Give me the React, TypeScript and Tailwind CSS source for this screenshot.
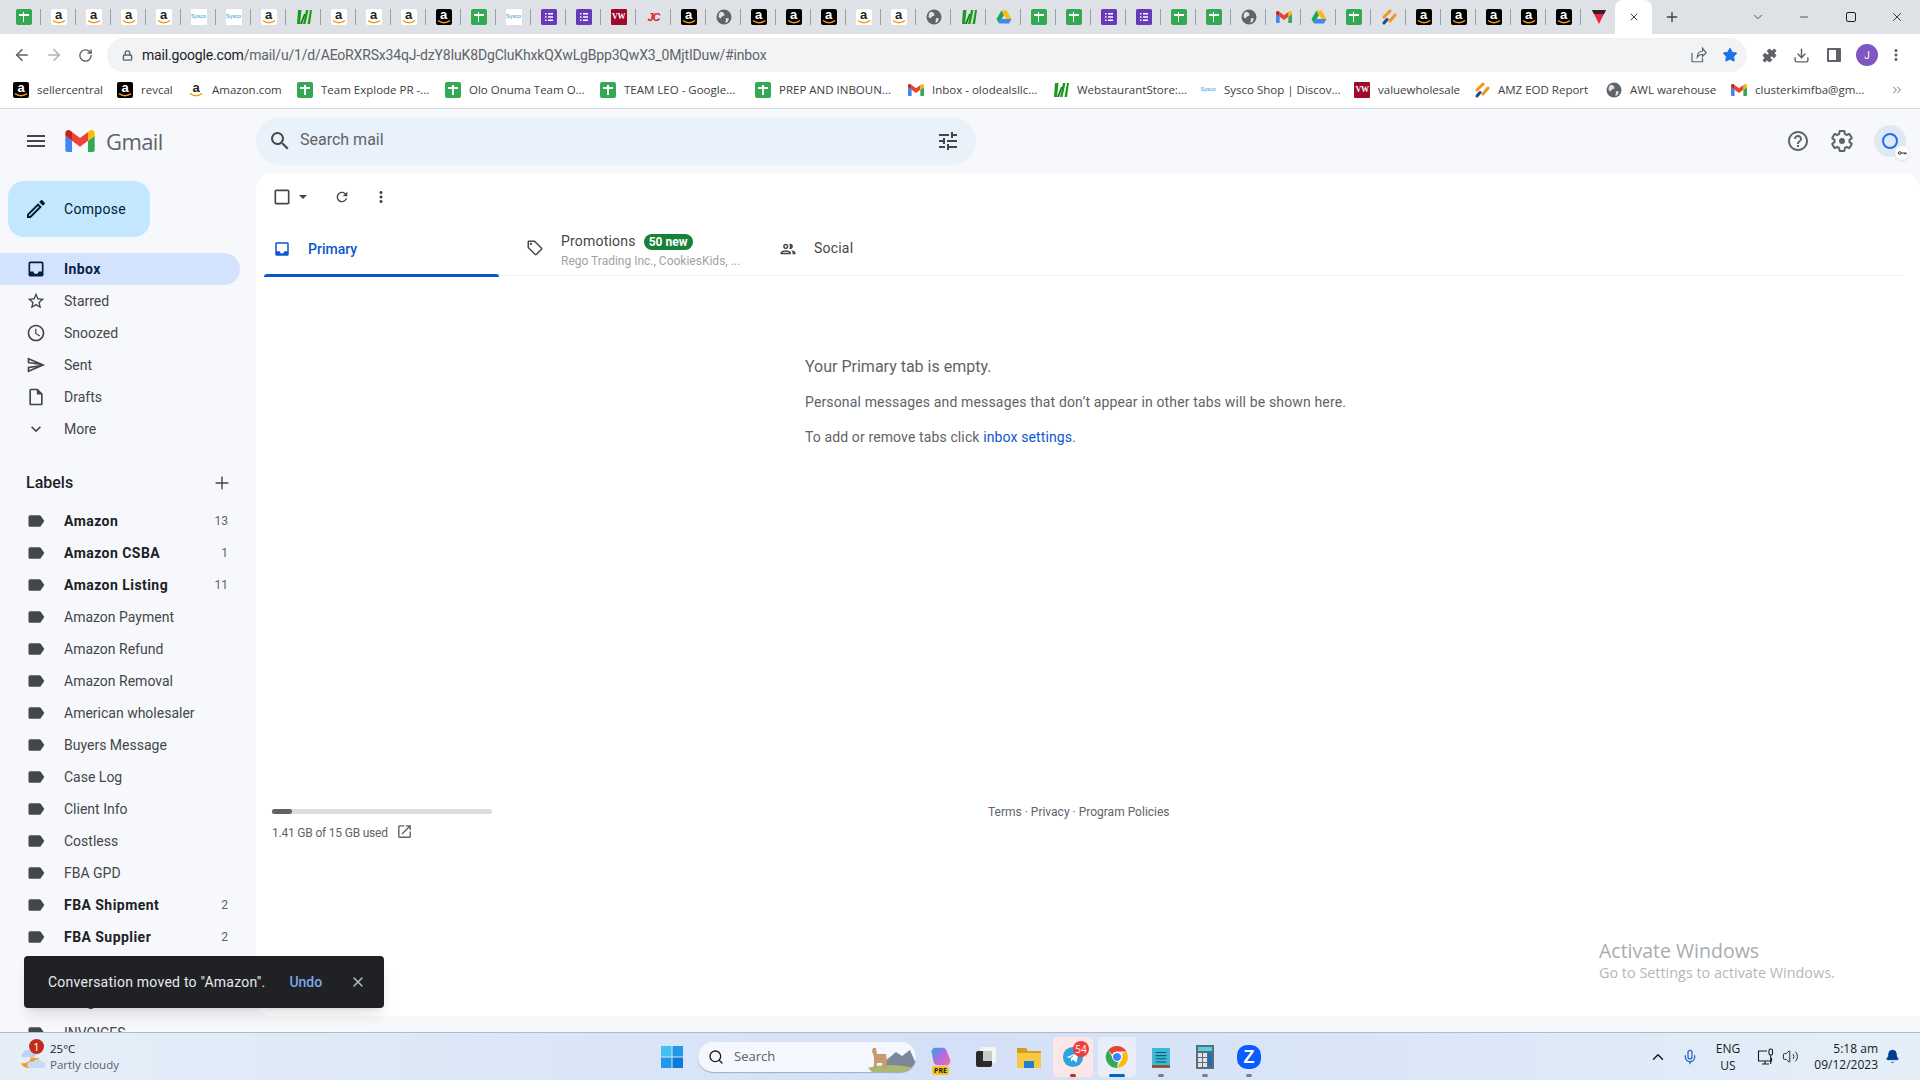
import React from 'react';
import { ArrowLeft, ArrowRight, RotateCw, Lock, Star, Puzzle, Download, ChevronDown, ChevronUp, Minus, Plus, X, Mic, Volume2, Bell, Search, ChevronsRight } from 'lucide-react';

const ICONS = {
  menu: 'M3 18h18v-2H3v2zm0-5h18v-2H3v2zm0-7v2h18V6H3z',
  search: 'M15.5 14h-.79l-.28-.27A6.471 6.471 0 0 0 16 9.5 6.5 6.5 0 1 0 9.5 16c1.61 0 3.09-.59 4.23-1.57l.27.28v.79l5 4.99L20.49 19l-4.99-5zm-6 0C7.01 14 5 11.99 5 9.5S7.01 5 9.5 5 14 7.01 14 9.5 11.99 14 9.5 14z',
  tune: 'M3 17v2h6v-2H3zM3 5v2h10V5H3zm10 16v-2h8v-2h-8v-2h-2v6h2zM7 9v2H3v2h4v2h2V9H7zm14 4v-2H11v2h10zm-6-4h2V7h4V5h-4V3h-2v6z',
  inbox: 'M19 3H5c-1.1 0-2 .9-2 2v14c0 1.1.9 2 2 2h14c1.1 0 2-.9 2-2V5c0-1.1-.9-2-2-2zm0 12h-4c0 1.66-1.34 3-3 3s-3-1.34-3-3H5V5h14v10z',
  star: 'M22 9.24l-7.19-.62L12 2 9.19 8.63 2 9.24l5.46 4.73L5.82 21 12 17.27 18.18 21l-1.63-7.03L22 9.24zM12 15.4l-3.76 2.27 1-4.28-3.32-2.88 4.38-.38L12 6.1l1.71 4.04 4.38.38-3.32 2.88 1 4.28L12 15.4z',
  clock: 'M11.99 2C6.47 2 2 6.48 2 12s4.47 10 9.99 10C17.52 22 22 17.52 22 12S17.52 2 11.99 2zM12 20c-4.42 0-8-3.58-8-8s3.58-8 8-8 8 3.58 8 8-3.58 8-8 8zm.5-13H11v6l5.25 3.15.75-1.23-4.5-2.67z',
  send: 'M4.01 6.03l7.51 3.22-7.52-1 .01-2.22m7.5 8.72L4 17.97v-2.22l7.51-1M2.01 3L2 10l15 2-15 2 .01 7L23 12 2.01 3z',
  draft: 'M14 2H6c-1.1 0-1.99.9-1.99 2L4 20c0 1.1.89 2 1.99 2H18c1.1 0 2-.9 2-2V8l-6-6zM6 20V4h7v5h5v11H6z',
  more: 'M16.59 8.59L12 13.17 7.41 8.59 6 10l6 6 6-6z',
  label: 'M17.63 5.84C17.27 5.33 16.67 5 16 5L5 5.01C3.9 5.01 3 5.9 3 7v10c0 1.1.9 1.99 2 1.99L16 19c.67 0 1.27-.33 1.63-.84L22 12l-4.37-6.16z',
  refresh: 'M17.65 6.35C16.2 4.9 14.21 4 12 4c-4.42 0-7.99 3.58-7.99 8s3.57 8 7.99 8c3.73 0 6.84-2.55 7.73-6h-2.08c-.82 2.33-3.04 4-5.65 4-3.31 0-6-2.69-6-6s2.69-6 6-6c1.66 0 3.14.69 4.22 1.78L13 11h7V4l-2.35 2.35z',
  dots: 'M12 8c1.1 0 2-.9 2-2s-.9-2-2-2-2 .9-2 2 .9 2 2 2zm0 2c-1.1 0-2 .9-2 2s.9 2 2 2 2-.9 2-2-.9-2-2-2zm0 6c-1.1 0-2 .9-2 2s.9 2 2 2 2-.9 2-2-.9-2-2-2z',
  check: 'M19 5v14H5V5h14m0-2H5c-1.1 0-2 .9-2 2v14c0 1.1.9 2 2 2h14c1.1 0 2-.9 2-2V5c0-1.1-.9-2-2-2z',
  tag: 'M21.41 11.58l-9-9C12.05 2.22 11.55 2 11 2H4c-1.1 0-2 .9-2 2v7c0 .55.22 1.05.59 1.42l9 9c.36.36.86.58 1.41.58s1.05-.22 1.41-.59l7-7c.37-.36.59-.86.59-1.41s-.23-1.06-.59-1.42zM13 20.01L4 11V4h7v-.01l9 9-7 7.02zM6.5 5A1.5 1.5 0 1 0 6.5 8 1.5 1.5 0 1 0 6.5 5z',
  people: 'M9 13.75c-2.34 0-7 1.17-7 3.5V19h14v-1.75c0-2.33-4.66-3.5-7-3.5zM4.34 17c.84-.58 2.87-1.25 4.66-1.25s3.82.67 4.66 1.25H4.34zM9 12c1.93 0 3.5-1.57 3.5-3.5S10.93 5 9 5 5.5 6.57 5.5 8.5 7.07 12 9 12zm0-5c.83 0 1.5.67 1.5 1.5S9.83 10 9 10s-1.5-.67-1.5-1.5S8.17 7 9 7zm7.04 6.81c1.16.84 1.96 1.96 1.96 3.44V19h4v-1.75c0-2.02-3.5-3.17-5.96-3.44zM15 12c1.93 0 3.5-1.57 3.5-3.5S16.93 5 15 5c-.54 0-1.04.13-1.5.35.63.89 1 1.98 1 3.15s-.37 2.26-1 3.15c.46.22.96.35 1.5.35z',
  help: 'M11 18h2v-2h-2v2zm1-16C6.48 2 2 6.48 2 12s4.48 10 10 10 10-4.48 10-10S17.52 2 12 2zm0 18c-4.41 0-8-3.59-8-8s3.59-8 8-8 8 3.59 8 8-3.59 8-8 8zm0-14c-2.21 0-4 1.79-4 4h2c0-1.1.9-2 2-2s2 .9 2 2c0 2-3 1.75-3 5h2c0-2.25 3-2.5 3-5 0-2.21-1.79-4-4-4z',
  edit: 'M3 17.25V21h3.75L17.81 9.94l-3.75-3.75L3 17.25zM5.92 19H5v-.92l9.06-9.06.92.92L5.92 19zM20.71 5.63l-2.34-2.34a1 1 0 0 0-1.41 0l-1.83 1.83 3.75 3.75 1.83-1.83a1 1 0 0 0 0-1.41z',
  open: 'M19 19H5V5h7V3H5a2 2 0 0 0-2 2v14a2 2 0 0 0 2 2h14c1.1 0 2-.9 2-2v-7h-2v7zM14 3v2h3.59l-9.83 9.83 1.41 1.41L19 6.41V10h2V3h-7z',
};

function Mat({ d, className }: { d: string; className: string }) {
  return (
    <svg viewBox="0 0 24 24" className={className} fill="currentColor">
      <path d={d} />
    </svg>
  );
}

function GmailLogo({ className }: { className: string }) {
  return (
    <svg viewBox="52 42 88 66" className={className}>
      <path fill="#4285f4" d="M58 108h14V74L52 59v43c0 3.32 2.69 6 6 6" />
      <path fill="#34a853" d="M120 108h14c3.32 0 6-2.69 6-6V59l-20 15" />
      <path fill="#fbbc04" d="M120 48v26l20-15v-8c0-7.42-8.47-11.65-14.4-7.2" />
      <path fill="#ea4335" d="M72 74V48l24 18 24-18v26L96 92" />
      <path fill="#c5221f" d="M52 51v8l20 15V48l-5.6-4.2c-5.94-4.45-14.4-.22-14.4 7.2" />
    </svg>
  );
}

function Favicon({ kind }: { kind: string }) {
  if (kind === 'sheet')
    return (
      <div className="w-[16px] h-[16px] rounded-[2px] bg-[#34a853] flex items-center justify-center relative">
        <div className="w-[10px] h-[1.5px] bg-white absolute top-[5px]" />
        <div className="w-[1.5px] h-[10px] bg-white" />
      </div>
    );
  if (kind === 'form')
    return (
      <svg viewBox="0 0 16 16" className="w-[16px] h-[16px]">
        <rect x="0" width="16" height="16" rx="1.5" fill="#673ab7" />
        <path d="M4 4h1.5v1.5H4zM7 4h5v1.5H7zM4 7.2h1.5v1.5H4zM7 7.2h5v1.5H7zM4 10.4h1.5v1.5H4zM7 10.4h5v1.5H7z" fill="#fff" />
      </svg>
    );
  if (kind === 'amazon' || kind === 'amazonDark') {
    const dark = kind === 'amazonDark';
    return (
      <div className={`w-[16px] h-[16px] rounded-[2px] relative flex justify-center ${dark ? 'bg-black' : 'bg-white'}`}>
        <span className={`text-[13px] leading-[12px] font-bold font-['Liberation_Sans',sans-serif] ${dark ? 'text-white' : 'text-[#222222]'}`}>a</span>
        <svg viewBox="0 0 16 16" className="absolute inset-0">
          <path d="M2 11.5c3.5 3 8.5 3 12 0" stroke="#f49b1c" strokeWidth="1.6" fill="none" />
        </svg>
      </div>
    );
  }
  if (kind === 'sysco')
    return (
      <div className="w-[16px] h-[16px] bg-white flex items-center justify-center overflow-hidden">
        <span className="text-[5.5px] leading-none text-[#1e9ad6] font-['Liberation_Sans',sans-serif]">Sysco</span>
      </div>
    );
  if (kind === 'web')
    return (
      <svg viewBox="0 0 16 16" className="w-[16px] h-[16px]">
        <path d="M2 1h3.500L4 15H1zM7 15L10 1h2.500L9.500 15zM11.500 15L14 1h2l-2 14z" fill="#1c9a1c" />
        <path d="M4 15L8 5l1.500 0L6 15z" fill="#0b7d0b" />
      </svg>
    );
  if (kind === 'vw')
    return (
      <div className="w-[16px] h-[16px] rounded-[1px] bg-[#9d0a2c] flex items-center justify-center">
        <span className="text-[8px] font-bold leading-none tracking-[-0.5px] text-white font-['Liberation_Serif',serif]">VW</span>
      </div>
    );
  if (kind === 'jc')
    return <span className="w-[16px] h-[16px] flex items-center justify-center text-[11px] italic font-bold tracking-[-1px] text-[#e0201c] font-['Liberation_Sans',sans-serif]">JC</span>;
  if (kind === 'globe')
    return (
      <svg viewBox="0 0 16 16" className="w-[16px] h-[16px]">
        <circle cx="8" cy="8" r="7.5" fill="#5f6368" />
        <path d="M5 2.500l3 1.500.5 2.500-2.500 1-1.500 2L2.500 8 3 4.500zM10 9l3 .5-1.500 3.500-2 1z" fill="#dee1e6" />
      </svg>
    );
  if (kind === 'gmail') return <GmailLogo className="w-[16px] h-[12px]" />;
  if (kind === 'drive')
    return (
      <svg viewBox="0 0 16 16" className="w-[16px] h-[16px]">
        <path d="M5.500 1.500L.5 10l2.500 4.500L8 6z" fill="#1fa463" />
        <path d="M5.500 1.500h5L15.500 10h-5z" fill="#fbbc04" />
        <path d="M3 14.500h10l2.500-4.500h-10z" fill="#4285f4" />
      </svg>
    );
  if (kind === 'jira')
    return (
      <svg viewBox="0 0 16 16" className="w-[16px] h-[16px]">
        <path d="M3 8l6-6M9 12l5-6" stroke="#f7941d" strokeWidth="3" strokeLinecap="round" />
        <path d="M3 14l3-3.500" stroke="#1d4e89" strokeWidth="3" strokeLinecap="round" />
      </svg>
    );
  return (
    <svg viewBox="0 0 16 16" className="w-[16px] h-[16px]">
      <path d="M1 1h14l-7 14z" fill="#e8253c" />
      <path d="M1 1h14l-2 4H3z" fill="#32202a" />
    </svg>
  );
}

const TABS = [
  'sheet', 'amazon', 'amazon', 'amazon', 'amazon', 'sysco', 'sysco', 'amazon', 'web', 'amazon', 'amazon', 'amazon',
  'amazonDark', 'sheet', 'sysco', 'form', 'form', 'vw', 'jc', 'amazonDark', 'globe', 'amazonDark', 'amazonDark', 'amazonDark',
  'amazon', 'amazon', 'globe', 'web', 'drive', 'sheet', 'sheet', 'form', 'form', 'sheet', 'sheet', 'globe', 'gmail', 'drive',
  'sheet', 'jira', 'amazonDark', 'amazonDark', 'amazonDark', 'amazonDark', 'amazonDark', 'tri',
];

const BOOKMARKS = [
  { kind: 'amazonDark', text: 'sellercentral', w: 'w-[64px]' },
  { kind: 'amazonDark', text: 'revcal', w: 'w-[31px]' },
  { kind: 'amazon', text: 'Amazon.com', w: 'w-[69px]' },
  { kind: 'sheet', text: 'Team Explode PR -...', w: 'w-[108px]' },
  { kind: 'sheet', text: 'Olo Onuma Team O...', w: 'w-[115px]' },
  { kind: 'sheet', text: 'TEAM LEO - Google...', w: 'w-[115px]' },
  { kind: 'sheet', text: 'PREP AND INBOUN...', w: 'w-[113px]' },
  { kind: 'gmail', text: 'Inbox - olodealsllc...', w: 'w-[105px]' },
  { kind: 'web', text: 'WebstaurantStore:...', w: 'w-[107px]' },
  { kind: 'sysco', text: 'Sysco Shop | Discov...', w: 'w-[114px]' },
  { kind: 'vw', text: 'valuewholesale', w: 'w-[80px]' },
  { kind: 'jira', text: 'AMZ EOD Report', w: 'w-[92px]' },
  { kind: 'globe', text: 'AWL warehouse', w: 'w-[85px]' },
  { kind: 'gmail', text: 'clusterkimfba@gm...', w: 'w-[109px]' },
];

const NAV = [
  { icon: ICONS.inbox, text: 'Inbox', active: true },
  { icon: ICONS.star, text: 'Starred' },
  { icon: ICONS.clock, text: 'Snoozed' },
  { icon: ICONS.send, text: 'Sent' },
  { icon: ICONS.draft, text: 'Drafts' },
  { icon: ICONS.more, text: 'More' },
];

const LABELS = [
  { name: 'Amazon', count: '13' },
  { name: 'Amazon CSBA', count: '1' },
  { name: 'Amazon Listing', count: '11' },
  { name: 'Amazon Payment' },
  { name: 'Amazon Refund' },
  { name: 'Amazon Removal' },
  { name: 'American wholesaler' },
  { name: 'Buyers Message' },
  { name: 'Case Log' },
  { name: 'Client Info' },
  { name: 'Costless' },
  { name: 'FBA GPD' },
  { name: 'FBA Shipment', count: '2' },
  { name: 'FBA Supplier', count: '2' },
  { name: 'Fee' },
  { name: 'Freight' },
  { name: 'INVOICES' },
];

function BrowserChrome() {
  return (
    <div className="shrink-0 font-['Roboto',sans-serif]">
      <div className="h-[34px] bg-[#dee1e6] flex pl-[6px] items-center">
        {TABS.map((kind, i) => (
          <div key={i} className="w-[35px] h-[34px] flex items-center justify-center relative shrink-0">
            <Favicon kind={kind} />
            {i < TABS.length - 1 && <div className="absolute right-0 top-[9px] w-px h-[16px] bg-[#9aa0a6]" />}
          </div>
        ))}
        <div className="w-[37px] h-[34px] bg-white rounded-t-[8px] flex items-center justify-center shrink-0 ml-[-1px]">
          <X className="w-[12px] h-[12px] text-[#45494d]" strokeWidth={2} />
        </div>
        <Plus className="w-[16px] h-[16px] ml-[12px] text-[#3c4043]" strokeWidth={2} />
        <ChevronDown className="w-[14px] h-[14px] ml-[71px] text-[#3c4043]" strokeWidth={1.5} />
        <Minus className="w-[12px] h-[12px] ml-[33px] text-[#202124]" strokeWidth={1.5} />
        <div className="w-[10px] h-[10px] ml-[36px] border border-[#202124] rounded-[2px]" />
        <X className="w-[14px] h-[14px] ml-[34px] text-[#202124]" strokeWidth={1.5} />
      </div>

      <div className="h-[42px] bg-white flex items-center">
        <ArrowLeft className="w-[18px] h-[18px] ml-[13px] text-[#5f6368]" strokeWidth={2.2} />
        <ArrowRight className="w-[18px] h-[18px] ml-[14px] text-[#b0b3b8]" strokeWidth={2.2} />
        <RotateCw className="w-[15px] h-[15px] ml-[15px] text-[#5f6368]" strokeWidth={2.2} />
        <div className="ml-[14px] w-[1640px] h-[34px] bg-[#f1f3f4] rounded-full flex items-center pl-[15px] pr-[9px]">
          <Lock className="w-[11px] h-[11px] text-[#5f6368]" strokeWidth={3} />
          <div className="ml-[9px] text-[14px] tracking-[-0.17px] text-[#5f6368] whitespace-nowrap">
            <span className="text-[#202124]">mail.google.com</span>/mail/u/1/d/AEoRXRSx34qJ-dzY8IuK8DgCluKhxkQXwLgBpp3QwX3_0MjtIDuw/#inbox
          </div>
          <svg viewBox="0 0 24 24" className="w-[18px] h-[18px] ml-auto text-[#5f6368]" fill="none" stroke="currentColor" strokeWidth="1.6">
            <path d="M4 9v12h14v-5M11 15c0-5 3-8 7-8V3l5 6-5 5v-3c-3 0-5 1-7 4z" />
          </svg>
          <Star className="w-[16px] h-[16px] ml-[15px] text-[#1a73e8]" fill="#1a73e8" strokeWidth={1.5} />
        </div>
        <Puzzle className="w-[15px] h-[15px] ml-[15px] text-[#5f6368]" fill="#5f6368" strokeWidth={1.5} />
        <Download className="w-[17px] h-[17px] ml-[16px] text-[#5f6368]" strokeWidth={2} />
        <div className="w-[14px] h-[14px] ml-[17px] border-2 border-[#5f6368] border-r-[5px] rounded-[1px]" />
        <div className="w-[22px] h-[22px] ml-[15px] rounded-full bg-[#7e57c2] flex items-center justify-center text-[10px] text-white">J</div>
        <Mat d={ICONS.dots} className="w-[18px] h-[18px] ml-[9px] text-[#5f6368]" />
      </div>

      <div className="h-[33px] pb-[4px] bg-white border-b border-[#d9dbdf] flex items-center pl-[13px] relative">
        <div className="flex items-center gap-[16px] font-['Open_Sans',sans-serif]">
          {BOOKMARKS.map((b) => (
            <div key={b.text} className="flex items-center gap-[8px] shrink-0">
              <div className="w-[16px] h-[16px] flex items-center justify-center shrink-0">
                <Favicon kind={b.kind} />
              </div>
              <span className={`${b.w} text-[11.5px] text-[#3c4043] whitespace-nowrap`}>{b.text}</span>
            </div>
          ))}
        </div>
        <ChevronsRight className="absolute right-[16px] top-[7px] w-[14px] h-[14px] text-[#5f6368]" strokeWidth={1.6} />
      </div>
    </div>
  );
}

function Sidebar() {
  return (
    <div className="w-[256px] shrink-0 h-full overflow-hidden flex flex-col">
      <div className="h-[64px] shrink-0 flex items-center pl-[24px]">
        <Mat d={ICONS.menu} className="w-[24px] h-[24px] text-[#444746]" />
        <GmailLogo className="w-[30px] h-[22px] ml-[17px]" />
        <span className="ml-[11px] text-[22px] leading-none text-[#5f6368] font-['Open_Sans',sans-serif] tracking-[-0.6px]">Gmail</span>
      </div>
      <div className="ml-[8px] mt-[8px] w-[142px] h-[56px] shrink-0 rounded-[16px] bg-[#c2e7ff] flex items-center pl-[16px]">
        <Mat d={ICONS.edit} className="w-[24px] h-[24px] text-[#001d35]" />
        <span className="ml-[16px] text-[14px] tracking-[0.3px] text-[#001d35]">Compose</span>
      </div>
      <div className="mt-[16px] shrink-0">
        {NAV.map((n) => (
          <div key={n.text} className={`w-[240px] h-[32px] flex items-center pl-[26px] rounded-r-full ${n.active ? 'bg-[#d3e3fd] text-[#041e49] font-bold tracking-[0.4px]' : 'text-[#444746]'}`}>
            <Mat d={n.icon} className="w-[20px] h-[20px] mr-[18px] shrink-0" />
            <span className="text-[14px]">{n.text}</span>
          </div>
        ))}
      </div>
      <div className="h-[60px] shrink-0 flex items-end pb-[12px] pl-[26px] pr-[24px] justify-between">
        <span className="text-[16px] leading-[20px] font-medium text-[#1f1f1f]">Labels</span>
        <Plus className="w-[20px] h-[20px] text-[#444746]" strokeWidth={1.7} />
      </div>
      <div className="shrink-0">
        {LABELS.map((l) => (
          <div key={l.name} className={`w-[240px] h-[32px] flex items-center pl-[26px] pr-[12px] ${l.count ? 'font-bold tracking-[0.45px] text-[#202124]' : 'text-[#444746]'}`}>
            <Mat d={ICONS.label} className="w-[20px] h-[20px] mr-[18px] shrink-0 text-[#444746]" />
            <span className="text-[14px] flex-1">{l.name}</span>
            {l.count && <span className="text-[12px] font-normal tracking-normal text-[#5f6368]">{l.count}</span>}
          </div>
        ))}
      </div>
    </div>
  );
}

function MainPanel() {
  return (
    <div className="flex-1 min-h-0 bg-white rounded-t-[16px] rounded-bl-[16px] flex flex-col pl-[8px] pr-[16px]">
      <div className="h-[48px] shrink-0 flex items-center pl-[8px] text-[#444746]">
        <Mat d={ICONS.check} className="w-[20px] h-[20px]" />
        <div className="ml-[7px] border-x-[4px] border-x-transparent border-t-[4px] border-t-[#444746]" />
        <Mat d={ICONS.refresh} className="w-[16px] h-[16px] ml-[27px]" />
        <Mat d={ICONS.dots} className="w-[18px] h-[18px] ml-[22px]" />
      </div>
      <div className="h-[55px] shrink-0 flex border-b border-[#f1f3f4]">
        <div className="w-[235px] h-[55px] relative flex items-center pl-[8px] pt-[1px] text-[#0b57d0]">
          <Mat d={ICONS.inbox} className="w-[18px] h-[18px] ml-[1px]" />
          <span className="ml-[17px] text-[14px] font-medium">Primary</span>
          <div className="absolute left-0 right-0 bottom-[-1px] h-[3px] rounded-t-[3px] bg-[#0b57d0]" />
        </div>
        <div className="w-[280px] flex items-center pl-[27px]">
          <Mat d={ICONS.tag} className="w-[18px] h-[18px] text-[#444746] shrink-0" />
          <div className="ml-[17px] pt-[6px]">
            <div className="flex items-center h-[16px]">
              <span className="text-[14px] tracking-[0.2px] text-[#444746]">Promotions</span>
              <span className="ml-[8px] h-[16px] w-[49px] rounded-full bg-[#188038] text-white text-[12px] font-bold leading-[16px] text-center">50 new</span>
            </div>
            <div className="mt-[3px] text-[12px] leading-[16px] text-[#a0a3a6] whitespace-nowrap">Rego Trading Inc., CookiesKids, ...</div>
          </div>
        </div>
        <div className="flex items-center pt-[1px]">
          <Mat d={ICONS.people} className="w-[18px] h-[18px] text-[#444746]" />
          <span className="ml-[17px] text-[14px] tracking-[0.2px] text-[#444746]">Social</span>
        </div>
      </div>

      <div className="pl-[541px] pt-[81px] h-[533px] shrink-0 text-[#5f6368]">
        <div className="text-[16px] leading-[20px]">Your Primary tab is empty.</div>
        <div className="mt-[15px] text-[14px] leading-[20px] tracking-[0.15px]">Personal messages and messages that don’t appear in other tabs will be shown here.</div>
        <div className="mt-[15px] text-[14px] leading-[20px] tracking-[0.12px]">
          To add or remove tabs click <span className="text-[#0b57d0]">inbox settings</span>.
        </div>
      </div>

      <div className="flex pl-[8px] text-[12px] text-[#5f6368]">
        <div className="w-[220px] shrink-0">
          <div className="h-[5px] rounded-full bg-[#dadce0]">
            <div className="w-[20px] h-[5px] rounded-full bg-[#5f6368]" />
          </div>
          <div className="mt-[11px] flex items-center h-[16px]">
            <span className="tracking-[-0.2px]">1.41 GB of 15 GB used</span>
            <Mat d={ICONS.open} className="w-[17px] h-[17px] ml-[8px] mb-[3px]" />
          </div>
        </div>
        <div className="ml-[496px] mt-[-5px] leading-[16px]">Terms · Privacy · Program Policies</div>
      </div>
    </div>
  );
}

function GmailApp() {
  return (
    <div className="flex-1 min-h-0 bg-[#f6f8fc] flex font-['Roboto',sans-serif] overflow-hidden">
      <Sidebar />
      <div className="flex-1 min-w-0 flex flex-col pb-[16px]">
        <div className="h-[64px] shrink-0 flex items-center">
          <div className="w-[720px] h-[48px] rounded-full bg-[#e9f1fb] flex items-center pl-[12px] pr-[16px]">
            <Mat d={ICONS.search} className="w-[24px] h-[24px] text-[#444746]" />
            <span className="ml-[8px] mb-[2px] text-[16px] text-[#5f6368]">Search mail</span>
            <Mat d={ICONS.tune} className="w-[24px] h-[24px] ml-auto text-[#444746]" />
          </div>
          <div className="flex items-center ml-auto mr-[14px]">
            <Mat d={ICONS.help} className="w-[24px] h-[24px] text-[#5f6368]" />
            <svg viewBox="0 0 24 24" className="w-[24px] h-[24px] ml-[20px] text-[#5f6368]">
              <path fill="none" stroke="currentColor" strokeWidth="2" d="M19.43 12.98c.04-.32.07-.64.07-.98s-.03-.66-.07-.98l2.11-1.65c.19-.15.24-.42.12-.64l-2-3.46c-.12-.22-.39-.3-.61-.22l-2.49 1c-.52-.4-1.08-.73-1.69-.98l-.38-2.65C14.46 2.18 14.25 2 14 2h-4c-.25 0-.46.18-.49.42l-.38 2.65c-.61.25-1.17.59-1.69.98l-2.49-1c-.23-.09-.49 0-.61.22l-2 3.46c-.13.22-.07.49.12.64l2.11 1.65c-.04.32-.07.65-.07.98s.03.66.07.98l-2.11 1.65c-.19.15-.24.42-.12.64l2 3.46c.12.22.39.3.61.22l2.49-1c.52.4 1.08.73 1.69.98l.38 2.65c.03.24.24.42.49.42h4c.25 0 .46-.18.49-.42l.38-2.65c.61-.25 1.17-.59 1.69-.98l2.49 1c.23.09.49 0 .61-.22l2-3.46c.12-.22.07-.49-.12-.64l-2.11-1.65z" />
              <circle cx="12" cy="12" r="3" fill="currentColor" />
            </svg>
            <div className="w-[32px] h-[32px] ml-[20px] rounded-full bg-[#e1e8f5] flex items-center justify-center relative">
              <div className="w-[16px] h-[16px] rounded-full border-2 border-[#1a73e8]" />
              <div className="absolute right-[-3px] bottom-[-3px] w-[14px] h-[14px] rounded-full bg-white shadow flex items-center justify-center">
                <svg viewBox="0 0 10 6" className="w-[9px] h-[6px]" fill="none" stroke="#202124" strokeWidth="1">
                  <circle cx="2" cy="3" r="1.500" />
                  <path d="M3.500 3H9.500M7 3v1.500M9 3v1.500" />
                </svg>
              </div>
            </div>
          </div>
        </div>
        <MainPanel />
      </div>
    </div>
  );
}

function Weather() {
  return (
    <div className="flex items-center pl-[19px]">
      <div className="relative w-[26px] h-[26px]">
        <svg viewBox="0 0 26 26" className="w-[26px] h-[26px]">
          <path d="M3 13h12a3 3 0 0 0-3-6 5 5 0 0 0-8 2 3 3 0 0 0-1 4z" fill="#bcd2f2" />
          <path d="M2 19c5 1 9-1 10-6 2 1 6 1 8 1-1 6-5 10-10 10-4 0-7-2-8-5z" fill="#f59a23" />
          <path d="M10 24h14a3 3 0 0 0-1-6 5 5 0 0 0-9 0 3 3 0 0 0-4 6z" fill="#c4daf5" />
        </svg>
        <div className="absolute top-[-5px] left-[10px] w-[15px] h-[15px] rounded-full bg-[#c42b1c] text-white text-[11px] leading-[15px] text-center">1</div>
      </div>
      <div className="ml-[5px] font-['Open_Sans',sans-serif] text-[11.5px] leading-[16px]">
        <div className="text-[#1b1b1b]">25°C</div>
        <div className="text-[#5d6166]">Partly cloudy</div>
      </div>
    </div>
  );
}

function Taskbar() {
  return (
    <div className="h-[48px] shrink-0 border-t border-[#b4bac4] bg-gradient-to-r from-[#e6eff8] via-[#d3e0f7] to-[#e4eff8] flex items-center font-['Open_Sans',sans-serif] text-[#1b1b1b]">
      <div className="w-[650px] shrink-0">
        <Weather />
      </div>
      <div className="w-[44px] h-[40px] flex items-center justify-center">
        <svg viewBox="0 0 24 24" className="w-[24px] h-[24px]">
          <path d="M1 1h10.500v10.500H1z" fill="#3fc1f5" />
          <path d="M12.500 1H23v10.500H12.500z" fill="#1f9ae8" />
          <path d="M1 12.500h10.500V23H1z" fill="#1f9ae8" />
          <path d="M12.500 12.500H23V23H12.500z" fill="#0b79d8" />
        </svg>
      </div>
      <div className="ml-[4px] w-[218px] h-[30px] rounded-full bg-[#f4f7fe] shadow-[0_1px_1px_rgba(0,0,0,0.25)] flex items-center pl-[10px] relative overflow-hidden">
        <Search className="w-[16px] h-[16px] text-[#1b1b1b]" strokeWidth={2} />
        <span className="ml-[10px] text-[13px] text-[#5d6166]">Search</span>
        <svg viewBox="0 0 48 30" className="absolute right-[0px] top-0 w-[48px] h-[30px]">
          <path d="M16 20l12-10 6 4 8-6 6 14v8H18z" fill="#7e8799" />
          <path d="M0 26c10-4 30-4 46 0l-4 4H4z" fill="#a9b96e" />
          <path d="M5 6l3 0 1 6 9 0 1 7-2 8h-2l-1-6-5 0-1 6H6l0-12-2-6z" fill="#c79a72" />
        </svg>
      </div>
      <div className="ml-[3px] flex items-center">
        <div className="w-[44px] h-[40px] flex items-center justify-center relative">
          <svg viewBox="0 0 24 24" className="w-[22px] h-[22px]">
            <defs>
              <linearGradient id="cp" x1="0" y1="0" x2="1" y2="1">
                <stop offset="0" stopColor="#2aa6e8" />
                <stop offset="0.5" stopColor="#b46be0" />
                <stop offset="1" stopColor="#f06ea0" />
              </linearGradient>
            </defs>
            <path d="M6 2h8c2 0 3 1 4 3l4 10c1 3-1 6-4 6H9c-3 0-4-1-5-3L2 8c-1-3 1-6 4-6z" fill="url(#cp)" />
          </svg>
          <span className="absolute bottom-[2px] left-[13px] h-[9px] px-[2px] rounded-[2px] bg-[#f7c325] text-[7px] leading-[9px] font-bold text-[#222222]">PRE</span>
        </div>
        <div className="w-[44px] h-[40px] flex items-center justify-center relative">
          <div className="absolute w-[16px] h-[16px] top-[10px] left-[17px] rounded-[2px] bg-[#f4f4f4]" />
          <div className="absolute w-[16px] h-[16px] top-[14px] left-[13px] rounded-[2px] bg-[#2a2a2a]" />
          <div className="absolute w-[9px] h-[10px] top-[14px] left-[20px] bg-[#c9c9c9]" />
        </div>
        <div className="w-[44px] h-[40px] flex items-center justify-center">
          <svg viewBox="0 0 24 24" className="w-[24px] h-[24px]">
            <path d="M0 3h9l2 3h13v3H0z" fill="#d69c1f" />
            <path d="M0 8h24v15H0z" fill="#f7c942" />
            <path d="M8 16h8a1 1 0 0 1 1 1v6H7v-6a1 1 0 0 1 1-1z" fill="#1f7fd6" />
          </svg>
        </div>
        <div className="w-[40px] h-[40px] ml-[2px] mr-[3px] rounded-[4px] bg-[#fbe6e8] flex items-center justify-center relative">
          <svg viewBox="0 0 24 24" className="w-[22px] h-[22px]">
            <circle cx="12" cy="12" r="11" fill="#2fa3e0" />
            <path d="M5 12l13-5-2 11-4-3-2 2-.5-3.500 5-4.500-6.500 4z" fill="#fff" />
          </svg>
          <span className="absolute top-[4px] right-[4px] w-[16px] h-[16px] rounded-full bg-[#ef3c3c] text-white text-[10px] leading-[16px] text-center">54</span>
          <div className="absolute bottom-0 w-[6px] h-[3px] rounded-full bg-[#c42b1c]" />
        </div>
        <div className="w-[38px] h-[40px] ml-[2px] mr-[3px] rounded-[4px] bg-[#e8edf7] flex items-center justify-center relative">
          <svg viewBox="0 0 24 24" className="w-[24px] h-[24px]">
            <path d="M12 1a11 11 0 0 1 9.500 5.500H12a5.500 5.500 0 0 0-5 3L3.300 5A11 11 0 0 1 12 1z" fill="#ea4335" />
            <path d="M21.500 6.500A11 11 0 0 1 12 23l4.700-8.200a5.500 5.500 0 0 0 .2-5.800z" fill="#fbbc04" />
            <path d="M12 23A11 11 0 0 1 3.300 5L8 13.500a5.500 5.500 0 0 0 5 3z" fill="#34a853" />
            <circle cx="12" cy="12" r="4.500" fill="#4285f4" stroke="#fff" strokeWidth="1" />
          </svg>
          <div className="absolute bottom-0 w-[16px] h-[3px] rounded-full bg-[#0067c0]" />
        </div>
        <div className="w-[44px] h-[40px] flex items-center justify-center relative">
          <svg viewBox="0 0 20 24" className="w-[18px] h-[24px]">
            <path d="M0 2h20v19H0z" fill="#3fb8d8" />
            <path d="M0 21h20v3H0z" fill="#8c4a2a" />
            <path d="M4 7h12M4 10.500h12M4 14h12M4 17.500h12" stroke="#10566e" strokeWidth="1.2" />
          </svg>
          <div className="absolute bottom-0 w-[6px] h-[3px] rounded-full bg-[#7c7f84]" />
        </div>
        <div className="w-[44px] h-[40px] flex items-center justify-center relative">
          <svg viewBox="0 0 18 24" className="w-[18px] h-[24px]">
            <path d="M0 0h18v24H0z" fill="#5f6b76" />
            <path d="M2 2h14v4H2z" fill="#4fd2e8" />
            <path d="M2 8h4v4H2zM7 8h4v4H7zM2 13h4v4H2zM7 13h4v4H7zM2 18h4v4H2zM7 18h4v4H7z" fill="#dfe3e6" />
            <path d="M12 8h4v14h-4z" fill="#1d6fb8" />
          </svg>
          <div className="absolute bottom-0 w-[6px] h-[3px] rounded-full bg-[#7c7f84]" />
        </div>
        <div className="w-[44px] h-[40px] flex items-center justify-center relative">
          <div className="w-[24px] h-[24px] rounded-[10px] bg-[#0b5cff] flex items-center justify-center text-white text-[18px] font-bold leading-none font-['Liberation_Sans',sans-serif]">Z</div>
          <div className="absolute bottom-0 w-[6px] h-[3px] rounded-full bg-[#7c7f84]" />
        </div>
      </div>

      <div className="ml-auto flex items-center pr-[14px]">
        <div className="w-[32px] flex justify-center">
          <ChevronUp className="w-[18px] h-[18px] text-[#1b1b1b]" strokeWidth={2} />
        </div>
        <div className="w-[32px] flex justify-center">
          <Mic className="w-[16px] h-[16px] text-[#1f5fbf]" strokeWidth={1.8} />
        </div>
        <div className="w-[44px] text-center text-[12px] leading-[17px]">
          <div>ENG</div>
          <div>US</div>
        </div>
        <div className="w-[28px] ml-[2px] flex justify-center">
          <svg viewBox="0 0 18 18" className="w-[18px] h-[18px]" fill="none" stroke="#1b1b1b" strokeWidth="1.100">
            <path d="M10 3H1.500v10h13V10M5 16h7M8 13v3" />
            <rect x="12" y="1" width="3.500" height="6" rx="1.500" />
            <path d="M13.700 7v9" />
          </svg>
        </div>
        <div className="w-[20px] flex justify-center">
          <Volume2 className="w-[17px] h-[17px] text-[#1b1b1b]" strokeWidth={1.3} />
        </div>
        <div className="w-[78px] text-right text-[12px] leading-[16px]">
          <div>5:18 am</div>
          <div>09/12/2023</div>
        </div>
        <div className="w-[28px] flex justify-center">
          <Bell className="w-[15px] h-[15px] text-[#003e92]" fill="#003e92" strokeWidth={1.5} />
        </div>
      </div>
    </div>
  );
}

export default function App() {
  return (
    <div className="w-[1920px] h-[1080px] flex flex-col overflow-hidden relative bg-white">
      <BrowserChrome />
      <GmailApp />
      <Taskbar />

      {/* toast */}
      <div className="absolute left-[24px] top-[956px] w-[360px] h-[52px] rounded-[4px] bg-[#202124] shadow-lg flex items-center pl-[24px] font-['Roboto',sans-serif] text-[14px]">
        <span className="text-[#e8eaed] whitespace-nowrap tracking-[0.24px]">Conversation moved to "Amazon".</span>
        <span className="ml-[24px] font-medium text-[#7ba7ea]">Undo</span>
        <X className="w-[16px] h-[16px] ml-[28px] text-[#bdc1c6]" strokeWidth={2} />
      </div>

      {/* watermark */}
      <div className="absolute left-[1599px] top-[937px] font-['Open_Sans',sans-serif] pointer-events-none">
        <div className="text-[19.5px] leading-[27px] text-[#a8acb0]">Activate Windows</div>
        <div className="text-[14.4px] leading-[18px] text-[#b4b7ba]">Go to Settings to activate Windows.</div>
      </div>
    </div>
  );
}
